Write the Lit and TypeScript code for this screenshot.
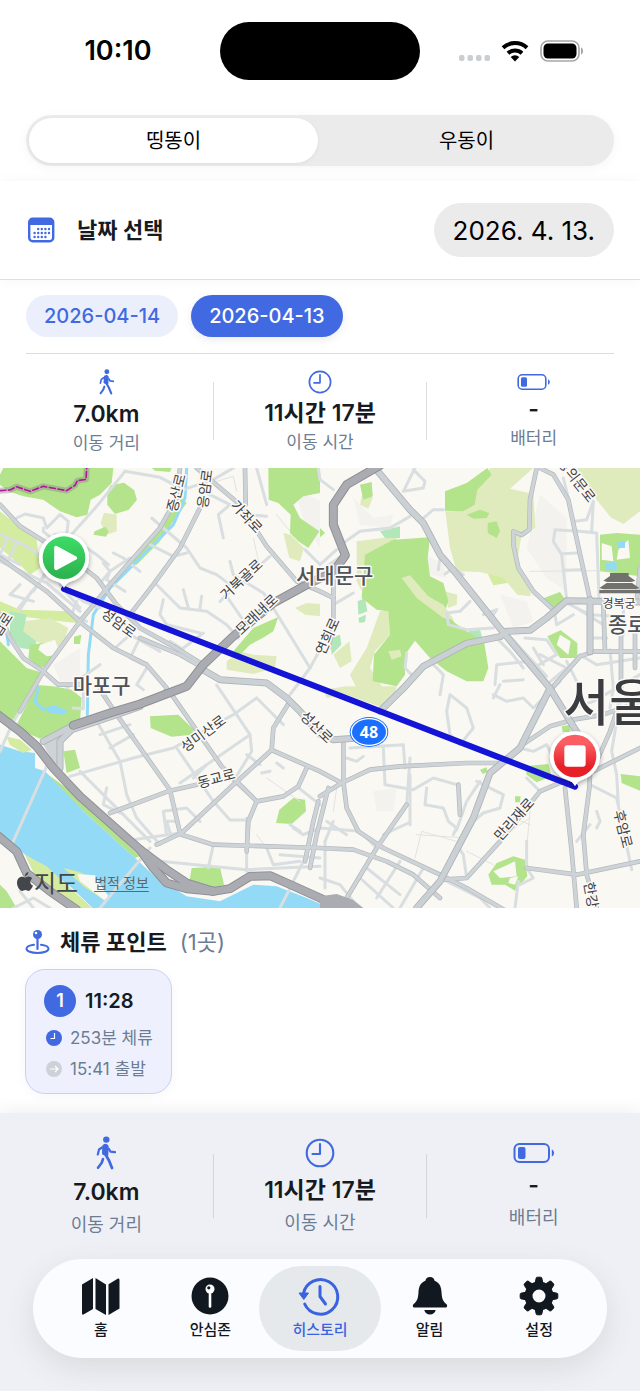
import { LitElement, html, svg, css } from "lit";
import { customElement, property, state } from "lit/decorators.js";

/* Map geometry is kept on a 1920 x 1320 sheet. */
const GREEN = [
  "10,0 340,0 335,45 300,80 272,95 262,140 230,148 180,130 130,95 70,85 25,70 0,50 0,20",
  "332,52 372,44 402,66 411,95 386,125 345,138 322,110 322,70",
  "284,190 316,176 326,190 318,206 280,200",
  "0,520 40,560 80,600 130,615 100,660 60,730 30,790 0,740",
  "110,651 160,655 215,665 245,690 240,760 190,790 120,812 70,790 50,770",
  "90,530 130,525 170,560 150,590 120,600 85,570",
  "222,506 244,500 240,528 222,528",
  "805,0 960,0 960,75 910,85 880,110 900,150 958,190 925,240 895,220 870,195 872,140 835,105 806,95",
  "760,480 835,447 820,490 788,510 750,530 720,560 700,550",
  "1180,215 1290,208 1283,270 1290,325 1330,345 1345,400 1335,430 1365,465 1400,490 1452,520 1465,600 1450,640 1400,640 1340,610 1290,570 1245,518 1215,560 1215,620 1190,655 1118,640 1122,560 1170,500 1165,430 1130,425 1085,390 1095,260",
  "1400,45 1462,0 1475,20 1432,65 1424,110 1390,130 1335,128 1335,70",
  "1400,140 1440,125 1468,135 1460,150 1420,152",
  "1463,165 1490,160 1500,190 1490,210 1463,195",
  "1626,392 1680,372 1694,392 1664,424 1640,410",
  "1642,505 1682,487 1732,525 1732,570 1680,570",
  "1800,200 1850,195 1920,200 1920,325 1800,310",
  "1575,895 1645,888 1655,925 1610,943 1580,920",
  "1862,918 1920,925 1920,968 1865,945",
  "1465,1220 1490,1185 1540,1165 1575,1175 1582,1225 1545,1268 1515,1250 1475,1250",
  "1545,985 1562,985 1560,1003 1545,1003",
  "1440,905 1460,898 1462,912 1448,918",
  "1685,775 1710,770 1712,792 1688,792",
  "450,745 535,740 582,785 575,800 515,806 452,780",
  "828,1065 838,1025 880,990 915,995 918,1030 875,1068",
  "575,1200 660,1196 672,1250 630,1262 568,1242",
  "190,850 225,845 240,900 200,915",
  "130,910 200,960 330,1080 420,1165 405,1170 250,1030 140,930",
  "75,1160 140,1195 210,1260 275,1320 210,1320 110,1230",
  "1080,50 1115,42 1118,85 1090,95",
  "960,180 975,195 960,208",
  "500,150 545,90 560,105 520,160 480,220 410,290 395,285",
  "455,0 515,0 510,12 465,8",
];
const OLIVE = [
  "312,134 350,140 350,190 320,200 302,165",
  "70,460 150,450 205,480 190,530 150,545 110,520 70,490",
  "850,195 872,200 912,240 900,280 868,270",
  "680,580 720,550 760,560 830,565 825,600 760,618 680,605",
  "885,420 920,405 960,408 960,445 915,440",
  "1085,85 1110,50 1118,90 1105,122 1080,110",
  "1470,0 1600,0 1530,62 1600,78 1606,180 1565,198 1550,290 1590,340 1592,385 1552,380 1510,330 1440,312 1370,310 1350,240 1336,130 1395,128 1430,70",
  "1730,0 1920,0 1920,130 1870,168 1832,148 1790,95",
  "1070,220 1190,205 1190,235 1110,270 1085,300 1085,370 1070,340",
  "1140,430 1165,425 1170,500 1125,550 1110,600 1150,661 1070,661 1050,620 1100,540",
  "1335,370 1372,380 1370,410 1345,420",
  "1040,655 1190,655 1180,700 1150,720 1040,680 980,690 970,665",
  "230,1215 285,1225 330,1290 310,1300 240,1235",
  "760,1310 830,1302 830,1320 750,1320",
  "20,806 60,815 95,845 70,855 30,830",
  "1000,560 1048,520 1055,580 1020,600",
];
const PALE = [
  "0,130 60,180 110,215 120,300 90,320 60,290 0,240",
  "1455,270 1550,285 1548,340 1480,352 1460,310",
  "0,400 60,425 210,430 232,465 180,460 60,445 0,470",
];
const MINT = [
  "30,430 80,440 70,490 110,520 100,545 60,540 30,500",
  "1140,190 1200,175 1200,210 1155,210",
  "1073,400 1095,390 1102,430 1075,440",
  "990,510 1020,500 1024,530 995,560",
  "1405,490 1440,485 1448,512 1410,515",
  "1075,450 1098,440 1095,462 1078,465",
];
const CLEAR = [
  "120,530 165,515 180,560 140,565 115,545",
  "1805,225 1835,235 1840,280 1805,275",
  "1855,245 1885,215 1890,270 1850,275",
  "1480,1210 1545,1180 1550,1225 1500,1230",
  "1680,500 1712,520 1705,560 1670,530",
  "1530,1230 1555,1225 1545,1250 1525,1245",
];
const WATER = [
  "0,830 60,850 105,855 105,900 135,910 250,1030 405,1170 470,1230 560,1285 660,1300 760,1250 830,1255 920,1290 990,1320 278,1320 210,1255 130,1195 60,1150 0,1105",
  "130,720 165,712 205,730 190,740 150,735",
  "1853,221 1875,221 1875,240 1853,240",
  "1815,285 1850,282 1850,308 1815,305",
];
const MINOR = [
  "375,10 290,115 210,205 165,200",
  "375,10 480,28 550,65 640,35 700,0",
  "50,150 75,138 130,150 140,180 180,140 205,160 200,200",
  "130,180 130,190 160,215",
  "0,200 60,225 105,250 150,290 120,340 80,390 55,420",
  "20,215 0,260", "50,225 25,275", "0,260 60,290", "0,280 140,345 240,430",
  "60,350 30,380 100,400", "95,370 60,425", "150,300 100,370", "180,350 250,400 300,420",
  "230,400 215,440 260,460", "200,375 240,420",
  "340,255 370,270 420,310", "310,285 330,310 305,340", "260,240 290,260 325,290",
  "455,150 560,240 600,300 650,320 690,350",
  "450,230 520,265 560,255", "375,370 320,335 330,310 390,270",
  "465,345 540,420 620,430 680,470 715,510",
  "550,365 565,420", "605,385 600,420", "490,395 480,440 500,470 600,495",
  "660,400 700,360 810,265", "690,280 700,320 790,375 810,400",
  "610,70 690,110 655,140 670,210", "740,140 800,145", "770,0 800,110",
  "680,385 725,450", "610,495 550,540", "510,520 550,545",
  "415,520 390,570 430,590", "440,600 410,650 430,665",
  "345,540 390,500 480,550", "300,590 200,660",
  "915,245 960,290 1010,245", "870,680 930,600 960,545", "820,420 930,600",
  "955,0 960,35 1000,65", "1245,0 1210,70 1270,60 1275,40 1240,5",
  "1030,225 1080,190 1170,180 1230,145", "1265,155 1300,125 1330,125",
  "960,310 1030,260", "1000,410 1060,375",
  "1320,270 1315,305", "1335,318 1360,300 1390,320",
  "1410,400 1380,430 1340,435 1345,470 1400,485 1480,480",
  "1450,440 1490,425 1470,455", "1485,505 1530,550 1570,600",
  "1575,510 1640,515 1670,560 1600,600", "1520,495 1640,625",
  "1700,400 1665,440 1670,470 1720,440", "1700,405 1770,440 1850,445",
  "1665,188 1660,220 1685,260 1700,395", "1665,185 1740,190 1790,195 1797,390",
  "1685,257 1730,255", "1690,307 1742,305", "1725,160 1760,155 1780,100",
  "1780,100 1775,190", "1690,30 1705,90", "1770,510 1820,510", "1730,420 1810,470",
  "1620,560 1700,600 1640,650", "1600,540 1630,590",
  "1485,650 1490,590 1590,580 1620,620", "1510,640 1570,635",
  "1220,555 1215,600 1240,625", "1300,590 1330,620 1320,680",
  "1660,650 1740,560 1790,590 1920,570", "1700,580 1730,640",
  "1830,545 1840,661 1830,720", "1870,420 1870,500", "1920,620 1780,700 1720,720",
  "1480,680 1520,700 1570,690 1600,720 1680,640", "1500,650 1480,690",
  "1350,680 1400,720 1420,780 1380,830 1350,800 1340,730 1350,680",
  "1050,840 1210,830 1215,900", "1090,865 1070,880 1040,870",
  "1150,840 1155,950 1240,965 1300,930 1370,950",
  "1280,960 1275,1010 1330,1020 1345,1060 1370,1080 1360,1100",
  "1220,1010 1230,870", "1230,920 1230,1070", "1130,1140 1080,1090 960,1080",
  "1040,1100 980,1060", "1000,1060 975,1120", "975,1120 975,1260",
  "1150,1100 1225,1065", "1370,1085 1400,1000 1440,940",
  "1430,940 1510,980 1500,1020 1450,1035 1420,1060",
  "1100,1200 1200,1280", "1080,1230 1180,1320", "1200,1180 1130,1290",
  "1270,1200 1200,1320", "960,1230 1020,1250 1060,1300",
  "1560,840 1600,850 1640,830 1660,870", "1580,930 1620,970",
  "1580,1120 1580,1200 1600,1230 1560,1250",
  "1730,1120 1770,1070", "1770,950 1850,990", "1790,1030 1800,1060 1790,1080",
  "1850,990 1895,1205", "1850,760 1835,850 1850,920 1855,1010",
  "1320,1230 1440,1290 1470,1320", "1400,1230 1390,1160 1370,1130",
  "1555,1240 1545,1320",
  "210,925 400,870 520,840 700,740 770,690", "770,690 850,770",
  "650,651 750,800 755,850 700,940", "530,840 640,1000 690,1056 740,1056",
  "290,760 360,880 380,980 410,1050 480,1130", "240,910 450,1120",
  "320,960 310,1010 360,1035", "300,800 390,770", "330,840 400,800",
  "540,945 620,890 750,800", "620,890 580,930", "500,1100 490,1030 560,1020 600,1060",
  "515,1110 500,1060 530,1060", "400,1115 540,1095",
  "480,1180 740,1205 960,1195", "640,1130 625,1200", "740,1050 740,1210",
  "800,1140 820,1190 900,1180", "840,1160 960,1170", "890,955 960,1010",
  "830,885 850,900", "785,915 810,910", "880,1080 910,1100 960,1080",
  "870,1070 900,1090", "740,860 780,890", "700,940 770,1000",
  "110,651 40,760 0,850", "140,895 40,1120", "220,720 250,722 250,640",
  "450,1140 300,1320", "910,1180 840,1320", "60,1270 100,1320", "40,1320 100,1290 150,1320",
];
const MEDIUM = [
  "540,0 530,90 480,180 330,350 240,460 130,610 60,730",
  "610,100 540,240 460,350 390,440",
  "590,0 720,110 800,235 890,340 960,370 1000,390",
  "735,0 737,110",
  "0,110 60,175 140,225 200,260 290,330 350,410 420,480 520,535 610,590",
  "0,270 140,370 250,470 340,540 440,590 500,660",
  "0,440 30,510 70,570 130,610 175,650 240,650",
  "420,510 540,560 610,600",
  "300,665 350,740 510,966 540,1095",
  "495,670 515,680 665,895 770,1000 745,1060 740,1150",
  "330,1035 510,968 590,950",
  "770,1000 850,985 895,955 920,900",
  "870,700 820,780 815,846 700,950 545,1095 470,1130",
  "815,846 960,910 1025,945",
  "545,1100 640,1130 960,1140 1060,1145 1160,1180 1240,1220 1320,1290",
  "955,1000 940,1060 915,1180", "985,960 950,1100 930,1200",
  "960,985 1025,945 1110,905 1200,895 1400,885 1490,885",
  "1030,820 1030,940 1040,1020 1075,1090 1150,1140 1320,1220 1400,1260 1520,1330",
  "1040,1290 1130,1140 1220,1010",
  "1000,310 1000,480 985,540",
  "1610,0 1590,95 1588,185 1565,201 1540,190 1540,230 1555,300 1600,370 1660,425",
  "1620,0 1660,20 1705,95 1725,190 1770,395 1770,555",
  "1655,661 1740,565 1780,551 1920,551", "1863,490 1863,661", "1905,490 1905,600",
  "1810,410 1815,550", "1920,300 1910,400",
  "1560,835 1650,775 1720,755 1810,740 1920,700",
  "1740,930 1820,890 1920,840", "1860,700 1830,790 1790,880",
  "1690,940 1620,970 1500,1120 1400,1230 1330,1235",
  "1695,960 1715,1150 1730,1320", "1770,920 1768,960 1750,1100 1760,1220 1790,1320",
  "1580,1200 1730,1220 1920,1180",
  "1375,950 1380,1040",
];
const LARGE = [
  "600,600 660,635 800,645 860,690 900,730 960,800 1000,815 1065,811",
  "1140,730 1210,661 1270,595 1400,526 1500,506 1520,490 1590,487 1640,450 1700,398 1800,400 1920,402",
  "1125,0 1230,125 1270,165 1320,260 1370,318 1500,481 1650,661 1735,800 1760,840",
  "1650,661 1560,840 1470,915 1420,1050 1320,1240 1250,1320",
  "1770,395 1770,551",
];
const HIGHWAY = [
  "-10,738 60,790 110,835 160,900 240,985 330,1065 420,1145 500,1205 560,1245 640,1270 690,1262 750,1225 810,1223 860,1245 960,1290 1040,1330",
  "420,1145 460,1200 500,1245 560,1262 640,1270",
  "220,772 330,735 420,708 560,655 610,590 700,505 820,405 930,345 1000,312 1036,262 1000,170 1000,110 1040,50 1140,-8",
  "-10,1100 50,1150 80,1215 150,1270 230,1325",
];
const THIN = [
  "830,140 870,190", "760,210 780,300", "1590,310 1800,308", "1540,1050 1590,1070",
  "1250,1100 1400,1110", "1245,1170 1265,1090 1370,1120", "1590,1030 1580,1140",
  "800,930 900,1000", "1400,1150 1480,1190", "650,40 700,25 710,70", "770,1100 800,1140",
  "1590,1050 1500,1110", "1010,960 1000,1030",
];

interface Label { t: string; x: number; y: number; r: number; k: string }
const LABELS: Label[] = [
  { t: "증산로", x: 526, y: 74, r: -76, k: "road" },
  { t: "응암로", x: 612, y: 62, r: -82, k: "road" },
  { t: "가좌로", x: 742, y: 144, r: 47, k: "road" },
  { t: "거북골로", x: 722, y: 332, r: -43, k: "road" },
  { t: "모래내로", x: 768, y: 437, r: -43, k: "road" },
  { t: "성암로", x: 358, y: 463, r: 36, k: "road" },
  { t: "연희로", x: 980, y: 504, r: -66, k: "road" },
  { t: "창의문로", x: 1732, y: 34, r: 52, k: "road" },
  { t: "성미산로", x: 608, y: 794, r: -36, k: "road" },
  { t: "동교로", x: 648, y: 928, r: -15, k: "road" },
  { t: "성산로", x: 952, y: 775, r: 44, k: "road" },
  { t: "만리재로", x: 1540, y: 1052, r: -48, k: "road" },
  { t: "후암로", x: 1872, y: 1082, r: 76, k: "road" },
  { t: "한강", x: 1776, y: 1280, r: 80, k: "road" },
  { t: "월드컵로", x: -18, y: 500, r: -56, k: "road" },
  { t: "경복궁", x: 1857, y: 402, r: 0, k: "place" },
  { t: "서대문구", x: 1004, y: 319, r: 0, k: "district" },
  { t: "마포구", x: 305, y: 648, r: 0, k: "district" },
  { t: "종로구", x: 1911, y: 466, r: 0, k: "district" },
  { t: "서울", x: 1828, y: 692, r: 0, k: "city" },
];

const polys = (list: string[], cls: string) =>
  list.map((p) => svg`<polygon class=${cls} points=${p}></polygon>`);
const lines = (list: string[], cls: string) =>
  list.map((p) => svg`<polyline class=${cls} points=${p}></polyline>`);

@customElement("route-map")
export class RouteMap extends LitElement {
  static styles = css`
    :host { display: block; position: relative; height: 440px; overflow: hidden; background: #f9f8f3; }
    .sheet { display: block; width: 100%; height: 100%; }
    polyline { fill: none; stroke-linejoin: round; stroke-linecap: round; }
    .green { fill: #b3e38b; }
    .olive { fill: #e0ebbd; }
    .pale { fill: #d3ec9f; }
    .mint { fill: #b1e7b9; }
    .clear { fill: #f9f8f3; }
    .shade { fill: #f3f2ef; }
    .water { fill: #93daf6; }
    .stream { stroke: #93daf6; stroke-width: 9; }
    .thin { stroke: #e2e3e2; stroke-width: 3; }
    .minor { stroke: #d9dee1; stroke-width: 9; }
    .medium-edge { stroke: #b3b8bc; stroke-width: 14; }
    .medium { stroke: #cdd3d6; stroke-width: 10; }
    .large-edge { stroke: #adb2b7; stroke-width: 21; }
    .large { stroke: #cad0d3; stroke-width: 16; }
    .highway-edge { stroke: #8f9096; stroke-width: 27; }
    .highway { stroke: #abacb2; stroke-width: 21; }
    .border-glow { stroke: #8d7f8c; stroke-opacity: 0.4; stroke-width: 18; }
    .border-line { stroke: #b5159a; stroke-width: 5; stroke-dasharray: 18 8; }
    .route { stroke: #1414d6; stroke-width: 18; }
    .label {
      font-family: "Noto Sans CJK KR", sans-serif;
      text-anchor: middle; dominant-baseline: central;
      fill: #3e4043; stroke: #fbfaf7; stroke-width: 9; stroke-linejoin: round; paint-order: stroke;
    }
    .road { font-size: 42px; }
    .place { font-size: 36px; }
    .district { font-size: 63px; fill: #4f5357; font-weight: 500; }
    .city { font-size: 150px; fill: #3a3c3f; font-weight: 500; }
    .shield { font: 700 48px "Noto Sans", sans-serif; fill: #fff; text-anchor: middle; }
    .credit {
      position: absolute; left: 17px; bottom: 10px; display: flex; align-items: center; gap: 16px;
      font-family: "Noto Sans CJK KR", sans-serif; color: #43474b;
    }
    .brand { display: flex; align-items: center; gap: 1px; font-size: 24px; line-height: 32px; }
    .legal { color: #5f676d; font-size: 14px; line-height: 20px; text-decoration: underline; text-underline-offset: 3px; }
  `;

  render() {
    return html`
      <svg class="sheet" viewBox="0 0 1920 1320" preserveAspectRatio="xMidYMid slice" role="img" aria-label="이동 경로 지도">
        <defs>
          <linearGradient id="go" x1="0" y1="0" x2="0" y2="1"><stop offset="0" stop-color="#3ddc67" /><stop offset="1" stop-color="#2cb14e" /></linearGradient>
          <linearGradient id="stop" x1="0" y1="0" x2="0" y2="1"><stop offset="0.2" stop-color="#fa5e63" /><stop offset="0.75" stop-color="#e71f27" /></linearGradient>
          <filter id="soft" x="-40%" y="-40%" width="180%" height="180%"><feDropShadow dx="0" dy="6" stdDeviation="8" flood-opacity="0.35" /></filter>
        </defs>
        ${polys([
          "880,60 960,100 960,240 920,180", "1060,90 1120,150 1180,140 1170,180 1080,170",
          "160,590 240,540 240,640 180,640", "1620,80 1700,150 1700,370 1640,330 1580,240",
          "1280,260 1330,290 1340,330 1290,320", "1120,970 1190,960 1180,1030 1130,1030",
          "1500,380 1580,400 1600,460 1540,480",
        ], "shade")}
        ${polys(PALE, "pale")}${polys(OLIVE, "olive")}${polys(MINT, "mint")}${polys(GREEN, "green")}
        ${polys(["1205,330 1230,322 1285,385 1330,410 1362,455 1330,450 1250,390", "1165,550 1200,545 1205,565 1175,575"], "olive")}
        ${polys(CLEAR, "clear")}${polys(WATER, "water")}
        ${polys(["20,806 60,815 95,845 70,855 30,830", "75,1160 140,1195 210,1260 275,1320 210,1320 110,1230"], "pale")}
        <polygon class="clear" points="0,1150 75,1200 130,1260 200,1320 0,1320"></polygon>
        <polygon class="green" points="0,1250 20,1270 50,1320 0,1320"></polygon>
        <polygon class="pale" points="190,1200 240,1212 300,1250 312,1296 250,1255"></polygon>
        <polygon class="clear" points="232,1218 285,1222 300,1250 330,1290 312,1296 240,1240"></polygon>
        ${lines(["560,0 555,90 520,170 450,240 400,290 330,360 280,440 265,560 262,740", "18,480 25,530", "115,660 105,700 130,725"], "stream")}
        ${lines(THIN, "thin")}${lines(MINOR, "minor")}
        ${lines(MEDIUM, "medium-edge")}${lines(MEDIUM, "medium")}
        ${lines(LARGE, "large-edge")}${lines(LARGE, "large")}
        <polygon fill="#cdd3d6" points="130,830 215,775 185,810 185,900 165,890"></polygon>
        ${lines(["215,785 350,740 420,715", "130,820 215,775", "180,900 180,820 215,785"], "large-edge")}
        ${lines(["215,785 350,740 420,715", "130,820 215,775", "180,900 180,820 215,785"], "large")}
        ${lines(HIGHWAY, "highway-edge")}${lines(HIGHWAY, "highway")}
        <polygon fill="#abacb2" points="960,1285 1010,1278 1060,1296 1090,1320 960,1320"></polygon>
        ${lines(["0,68 30,66 50,56 90,70 130,55 200,68 225,52 232,38 258,34 260,0"], "border-glow")}
        ${lines(["0,68 30,66 50,56 90,70 130,55 200,68 225,52 232,38 258,34 260,0"], "border-line")}
        <g fill="#71716e">
          <path d="M1830 315h56v9l20 14-12 4h-72l-12-4 20-14zM1820 345h76l22 15-12 4h-96l-12-4zM1828 348h60v12h-60zM1798 366h122v10h-122z" />
        </g>
        ${LABELS.map((l) => svg`<text class="label ${l.k}" transform="translate(${l.x} ${l.y}) rotate(${l.r})">${l.t}</text>`)}
        <ellipse cx="1107" cy="792" rx="58" ry="45" fill="#1a6fff"></ellipse>
        <ellipse cx="1107" cy="792" rx="53" ry="40" fill="#1a6fff" stroke="#fff" stroke-width="4"></ellipse>
        <text class="shield" x="1107" y="809">48</text>
        <polyline class="route" points="192,363 1725,956"></polyline>
        <g filter="url(#soft)"><path fill="#fff" d="M192 195a74 74 0 0 1 22 145q-16 5-22 20q-6-15-22-20a74 74 0 0 1 22-145z" /></g>
        <circle cx="192" cy="269" r="64" fill="url(#go)"></circle>
        <path d="M168 239v62l58-31z" fill="#fff" stroke="#fff" stroke-width="11" stroke-linejoin="round"></path>
        <g filter="url(#soft)"><path fill="#fff" d="M1725 790a74 74 0 0 1 22 145q-16 5-22 20q-6-15-22-20a74 74 0 0 1 22-145z" /></g>
        <circle cx="1725" cy="864" r="64" fill="url(#stop)"></circle>
        <rect x="1693" y="832" width="64" height="64" rx="9" fill="#fff"></rect>
      </svg>
      <div class="credit">
        <span class="brand">
          <svg width="16" height="20" viewBox="0 0 16 20" fill="#43474b" aria-hidden="true">
            <path d="M11.4 0c.1 2-1.500 4-3.500 4.100C7.700 2.200 9.400.2 11.400 0zM8.200 5.400C9 5.400 10 4.500 11.600 4.500c1.500 0 2.900.8 3.700 2-3 1.800-2.500 5.900.7 7.100-.7 2-2.500 5.200-4.300 5.300-1.300 0-1.700-.8-3.300-.8s-2 .8-3.200.8C2.700 19 0 14.500 0 10.700c0-3.700 2.400-6 4.700-6 1.500 0 2.700.7 3.500.7z" />
          </svg>
          지도
        </span>
        <a class="legal" href="#legal">법적 정보</a>
      </div>
    `;
  }
}

const walkIcon = (h: number) => html`
  <svg height=${h} viewBox="0 0 20 34" fill="none" stroke="#4169e1" stroke-linecap="round" stroke-linejoin="round" aria-hidden="true">
    <circle cx="10.300" cy="3.600" r="3.200" fill="#4169e1" stroke="none" />
    <path d="M7.800 10q2.500-1.500 3.400.5l-.4 8.500-3.300-1.500z" fill="#4169e1" stroke-width="3" />
    <path d="M6 11.500L3 13.500l-1.200 5M13 13l1.400 2.600 4.600.5" stroke-width="2.200" />
    <path d="M9.800 19l3.200 5.500 3 7.500" stroke-width="2.800" />
    <path d="M7 23l-1.400 4L2 31.800" stroke-width="2.600" />
  </svg>`;
const clockIcon = (h: number) => html`
  <svg height=${h} viewBox="0 0 30 30" fill="none" stroke="#4169e1" stroke-width="2.100" stroke-linecap="round" stroke-linejoin="round" aria-hidden="true">
    <circle cx="15" cy="15" r="13.300" /><path d="M15 6v10H7.500" />
  </svg>`;
const batteryIcon = (h: number) => html`
  <svg height=${h} viewBox="0 0 42 20" fill="none" stroke="#4169e1" stroke-width="2" aria-hidden="true">
    <rect x="1.500" y="1" width="34.500" height="18" rx="5" /><rect x="5" y="4" width="7.500" height="12" rx="2" fill="#4169e1" stroke="none" />
    <path d="M38.800 6.500c3 1.200 3 5.800 0 7z" fill="#4169e1" stroke="none" />
  </svg>`;

@customElement("trip-stats")
export class TripStats extends LitElement {
  @property({ type: Boolean, reflect: true }) large = false;

  static styles = css`
    :host { display: flex; align-items: center; height: 114px; }
    :host([large]) { height: 146px; }
    .stat { flex: 1 1 0; display: flex; flex-direction: column; align-items: center; gap: 5px; }
    .rule { width: 1px; height: 58px; background: #dcdde0; }
    .value { font-size: 23px; line-height: 28px; font-weight: 600; color: #161b22; }
    .label { font-size: 17px; line-height: 20px; color: #6b7c93; }
    svg { display: block; }
    :host([large]) .stat { gap: 8px; }
    :host([large]) .rule { height: 64px; background: #d3d5d8; }
    :host([large]) .label { font-size: 18px; line-height: 22px; }
  `;

  render() {
    const big = this.large;
    const stats = [
      { icon: walkIcon(big ? 34 : 26), value: "7.0km", label: "이동 거리" },
      { icon: clockIcon(big ? 30 : 24), value: "11시간 17분", label: "이동 시간" },
      { icon: batteryIcon(big ? 20 : 16), value: "-", label: "배터리" },
    ];
    return stats.map((s, i) => html`
      ${i ? html`<span class="rule"></span>` : null}
      <div class="stat">${s.icon}<span class="value">${s.value}</span><span class="label">${s.label}</span></div>
    `);
  }
}

const gearTeeth = [0, 45, 90, 135, 180, 225, 270, 315];
const tabs = [
  {
    name: "홈",
    icon: svg`<path d="M1 8.500L12 2v31L2.500 38.500Q1 39 1 37.500zM14.500 2L25 8.500V39l-10.500-6zM27.500 8.300L37 2.500Q38.500 2 38.500 4v28.500L27.500 39z" />`,
  },
  {
    name: "안심존",
    icon: svg`<circle cx="20" cy="20" r="18.500" /><circle cx="20" cy="13" r="4.500" fill="#fff" /><path d="M20 17v13.500" stroke="#fff" stroke-width="2.600" stroke-linecap="round" /><circle cx="18.800" cy="11.800" r="1.600" />`,
  },
  {
    name: "히스토리",
    icon: svg`<g fill="none" stroke="currentColor" stroke-width="3" stroke-linecap="round" stroke-linejoin="round"><path d="M3.500 17.500a17.300 17.300 0 1 1 1.200 10.500M20 10.500v10l5.500 7.500" /></g><path d="M-1 17h9.500l-4.700 6.500z" stroke="currentColor" stroke-linejoin="round" />`,
  },
  {
    name: "알림",
    icon: svg`<path d="M20 1c2.600 0 4.300 1.700 4.600 3.700 4.500 1.800 6.600 5.500 6.900 11 .3 6.500 1.200 9.300 4.800 12.300 1.500 1.400 1 3.500-1 3.500H4.700c-2 0-2.500-2.100-1-3.500 3.600-3 4.500-5.800 4.800-12.300.3-5.500 2.400-9.200 6.900-11C15.700 2.700 17.400 1 20 1zM14.300 34h11.400c-.6 2.800-2.800 4.600-5.700 4.600s-5.100-1.800-5.700-4.600z" />`,
  },
  {
    name: "설정",
    icon: svg`${gearTeeth.map((a) => svg`<path transform="rotate(${a} 20 20)" d="M16 8l1.200-6q.2-.8 1.200-.8h3.200q1 0 1.200.8L24 8z" stroke="currentColor" stroke-linejoin="round" />`)}<circle cx="20" cy="20" r="10.500" fill="none" stroke="currentColor" stroke-width="8" />`,
  },
];

@customElement("app-root")
export class AppRoot extends LitElement {
  @state() private pet = 0;
  @state() private day = 1;
  @state() private tab = 2;

  static styles = css`
    :host {
      display: block; background: #fff; color: #161b22;
      font-family: Inter, "Noto Sans CJK KR", sans-serif;
    }
    button { font: inherit; color: inherit; border: 0; background: none; padding: 0; margin: 0; cursor: pointer; }
    svg { display: block; flex: none; }
    .status { display: grid; grid-template-columns: 1fr 200px 1fr; align-items: center; padding: 22px 0 35px; }
    .time { text-align: center; padding-left: 16px; font-size: 27px; line-height: 32px; font-weight: 600; color: #000; }
    .island { height: 58px; border-radius: 29px; background: #000; }
    .signals { display: flex; align-items: center; justify-content: center; gap: 11px; padding-right: 18px; }
    .segments {
      display: flex; gap: 4px; margin: 0 26px 15px; padding: 3px; height: 45px; border-radius: 26px;
      background: #ebebeb; box-shadow: 0 2px 12px rgba(0, 0, 0, 0.04);
    }
    .segment { flex: 1; border-radius: 23px; font-size: 20px; line-height: 24px; color: #000; }
    .segment.on { background: #fff; box-shadow: 0 1px 4px rgba(0, 0, 0, 0.06); }
    .date-row {
      display: flex; align-items: center; gap: 22px; padding: 22px 26px; height: 54px;
      background: #fff; border-bottom: 1px solid #dfdfe1; box-shadow: 0 0 14px rgba(0, 0, 0, 0.04);
    }
    .date-title { flex: 1; margin: 0; font-size: 22px; line-height: 28px; font-weight: 600; }
    .date-button { height: 54px; padding: 0 19px; border-radius: 27px; background: #ebebeb; color: #000; font-size: 26px; }
    .days { display: flex; gap: 13px; margin: 0 26px; padding: 15px 0 16px; border-bottom: 1px solid #dcdcde; }
    .day { height: 42px; padding: 0 18px; border-radius: 21px; background: #ebeffc; color: #4169e1; font-size: 20px; font-weight: 500; }
    .day.on { background: #4169e1; color: #fff; box-shadow: 0 3px 8px rgba(0, 0, 0, 0.08); }
    .stays { padding: 19px 25px; display: flex; flex-direction: column; align-items: flex-start; gap: 12px; }
    .stays-head { display: flex; align-items: center; gap: 10px; font-size: 22px; line-height: 30px; }
    .stays-title { margin: 0; font-size: inherit; font-weight: 600; }
    .count { padding-left: 3px; color: #6b7c93; }
    .stay {
      display: flex; flex-direction: column; gap: 11px; padding: 15px 18px 14px; text-align: left;
      border: 1px solid #c5d1f6; border-radius: 20px; background: #eef1fd; box-shadow: 0 2px 12px rgba(0, 0, 0, 0.04);
    }
    .stay-line { display: flex; align-items: center; gap: 8px; height: 20px; padding-left: 2px; color: #6b7c93; font-size: 17px; line-height: 20px; }
    .stay-line.first { height: 32px; padding-left: 0; gap: 9px; font-size: 20px; font-weight: 600; color: #161b22; }
    .badge { width: 32px; height: 32px; border-radius: 50%; background: #4169e1; color: #fff; font-size: 18px; line-height: 32px; text-align: center; }
    .foot { background: #eff0f5; padding-bottom: 33px; box-shadow: 0 -2px 16px rgba(0, 0, 0, 0.07); }
    .nav {
      display: flex; margin: 0 33px; padding: 7px 13px; border-radius: 50px; background: #fbfcff;
      box-shadow: 0 10px 30px rgba(60, 80, 80, 0.13);
    }
    .tab {
      position: relative; flex: 1 1 0; height: 85px; display: flex; flex-direction: column;
      align-items: center; justify-content: center; gap: 3px; font-size: 15px; line-height: 22px; color: #11181f;
    }
    .tab span { font-weight: 500; }
    .tab.on { color: #3b62e0; }
    .tab.on::before { content: ""; position: absolute; inset: 0 -6px; border-radius: 43px; background: #e5e9ec; }
    .tab svg, .tab span { position: relative; overflow: visible; }
  `;

  render() {
    return html`
      <header class="status">
        <span class="time">10:10</span>
        <span class="island"></span>
        <span class="signals">
          <svg width="31" height="20" viewBox="0 0 31 20" fill="#c9ced3" aria-hidden="true">
            ${[0, 8.500, 17, 25.500].map((x) => svg`<rect x=${x} y="14" width="5.500" height="6" rx="2" />`)}
          </svg>
          <svg width="28" height="22" viewBox="0 0 28 22" fill="none" stroke="#000" stroke-width="4" aria-hidden="true">
            <path d="M2 7.800a17.500 17.500 0 0 1 24 0M7 13.200a10.400 10.400 0 0 1 14 0" />
            <path d="M14 21.500l-4.300-4.600a6.200 6.200 0 0 1 8.600 0z" fill="#000" stroke="none" />
          </svg>
          <svg width="44" height="22" viewBox="0 0 44 22" aria-hidden="true">
            <rect x="1" y="1" width="38" height="20" rx="7" fill="none" stroke="#a6a6a6" stroke-width="1.600" />
            <rect x="3.500" y="3.500" width="33" height="15" rx="4.500" />
            <path d="M41 7.500c2.800 1 2.800 6 0 7z" fill="#a6a6a6" />
          </svg>
        </span>
      </header>
      <div class="segments" role="tablist">
        ${["띵똥이", "우동이"].map((n, i) => html`
          <button class="segment ${i === this.pet ? "on" : ""}" role="tab" aria-selected=${i === this.pet} @click=${() => (this.pet = i)}>${n}</button>`)}
      </div>
      <section class="date-row">
        <svg width="29" height="26" viewBox="0 0 29 26" aria-hidden="true">
          <rect x="3.200" y="1.700" width="24" height="22.600" rx="3.500" fill="none" stroke="#4169e1" stroke-width="2.400" />
          <path d="M3 3h24.500v5H3z" fill="#4169e1" />
          <g fill="#4169e1">
            ${[[12.2, 12], [15.8, 12], [19.4, 12], [23, 12], [8.6, 16], [12.2, 16], [15.8, 16], [19.4, 16], [23, 16], [8.6, 20], [12.2, 20], [15.8, 20], [19.4, 20]].map(
              ([x, y]) => svg`<circle cx=${x} cy=${y} r="1.200" />`)}
          </g>
        </svg>
        <h1 class="date-title">날짜 선택</h1>
        <button class="date-button">2026. 4. 13.</button>
      </section>
      <div class="days">
        ${["2026-04-14", "2026-04-13"].map((d, i) => html`
          <button class="day ${i === this.day ? "on" : ""}" aria-pressed=${i === this.day} @click=${() => (this.day = i)}>${d}</button>`)}
      </div>
      <trip-stats></trip-stats>
      <route-map></route-map>
      <section class="stays">
        <div class="stays-head">
          <svg width="25" height="26" viewBox="0 0 25 26" fill="none" stroke="#4169e1" stroke-width="2" aria-hidden="true">
            <path d="M9 15.800c-4.500.5-7.500 2-7.500 4 0 2.400 4.700 4.200 11 4.200s11-1.800 11-4.200c0-2-3-3.500-7.500-4" stroke-linecap="round" />
            <path d="M12.500 8v12" stroke-width="2.200" stroke-linecap="round" />
            <circle cx="12.500" cy="5.500" r="4.500" fill="#4169e1" stroke="none" /><circle cx="11" cy="4" r="1.300" fill="#fff" stroke="none" />
          </svg>
          <h2 class="stays-title">체류 포인트</h2>
          <span class="count">(1곳)</span>
        </div>
        <button class="stay">
          <span class="stay-line first"><span class="badge">1</span>11:28</span>
          <span class="stay-line">
            <svg width="16" height="16" viewBox="0 0 16 16" aria-hidden="true"><circle cx="8" cy="8" r="8" fill="#4169e1" /><path d="M8.500 3v5.500h-4" fill="none" stroke="#fff" stroke-width="1.200" /></svg>
            253분 체류
          </span>
          <span class="stay-line">
            <svg width="16" height="16" viewBox="0 0 16 16" aria-hidden="true"><circle cx="8" cy="8" r="8" fill="#cdd2d8" /><path d="M4 8h8M9 5l3 3-3 3" fill="none" stroke="#fff" stroke-width="1.200" /></svg>
            15:41 출발
          </span>
        </button>
      </section>
      <footer class="foot">
        <trip-stats large></trip-stats>
        <nav class="nav">
          ${tabs.map((t, i) => html`
            <button class="tab ${i === this.tab ? "on" : ""}" aria-current=${i === this.tab ? "page" : "false"} @click=${() => (this.tab = i)}>
              <svg width="40" height="40" viewBox="0 0 40 40" fill="currentColor" aria-hidden="true">${t.icon}</svg>
              <span>${t.name}</span>
            </button>`)}
        </nav>
      </footer>
    `;
  }
}
